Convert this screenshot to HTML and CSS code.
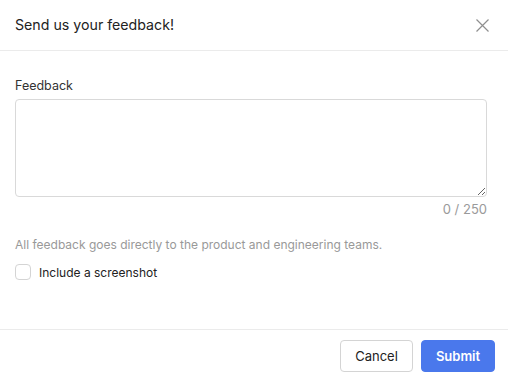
FILE: index.html
```html
<!DOCTYPE html>
<html>
<head>
<meta charset="utf-8">
<link rel="stylesheet" href="styles.css">
</head>
<body>
<div class="modal">
  <div class="modal-header">
    <h2 class="title">Send us your feedback!</h2>
    <button class="close" aria-label="Close">
      <svg width="13" height="13" viewBox="0 0 13 13"><path d="M0.5 0.5L12.5 12.5M12.5 0.5L0.5 12.5" stroke="#8f8f8f" stroke-width="1.2" fill="none"/></svg>
    </button>
  </div>
  <div class="modal-body">
    <label class="field-label">Feedback</label>
    <textarea class="feedback"></textarea>
    <div class="counter">0 / 250</div>
    <p class="helper">All feedback goes directly to the product and engineering teams.</p>
    <label class="check-row"><span class="checkbox"></span><span class="check-label">Include a screenshot</span></label>
  </div>
  <div class="modal-footer">
    <button class="btn btn-cancel">Cancel</button>
    <button class="btn btn-submit">Submit</button>
  </div>
</div>
</body>
</html>
```
FILE: styles.css
```css
* { box-sizing: border-box; }
html, body { margin: 0; padding: 0; background: #fff; }
body { font-family: Inter, "Liberation Sans", sans-serif; color: #1f1f1f; }
.modal { width: 508px; height: 381px; display: flex; flex-direction: column; }
.modal-header {
  height: 51px;
  border-bottom: 1px solid #ebebeb;
  display: flex;
  align-items: center;
  justify-content: space-between;
  padding: 0 19px 0 15px;
}
.title { margin: 0; font-size: 14.2px; font-weight: 400; color: #222; padding-bottom: 2px; }
.close { background: none; border: 0; padding: 0; width: 13px; height: 13px; display: flex; }
.modal-body { padding: 27px 21px 0 15px; flex: 1; display: flex; flex-direction: column; }
.field-label { font-size: 12.5px; color: #333; line-height: 16px; }
.feedback {
  margin-top: 5px;
  width: 472px;
  height: 98px;
  border: 1px solid #d9d9d9;
  border-radius: 4px;
  resize: vertical;
  font-family: inherit;
}
.counter { text-align: right; font-size: 13px; color: #9a9a9a; line-height: 16px; margin-top: 4px; }
.helper { margin: 20px 0 0; font-size: 12px; color: #999; line-height: 15px; }
.check-row { display: flex; align-items: center; margin-top: 12px; gap: 8px; }
.checkbox { width: 16px; height: 16px; border: 1px solid #d4d4d4; border-radius: 4px; }
.check-label { font-size: 12px; color: #222; }
.modal-footer {
  height: 52px;
  border-top: 1px solid #ebebeb;
  display: flex;
  justify-content: flex-end;
  align-items: flex-start;
  padding: 10px 13px 0 0;
  gap: 8px;
}
.btn { height: 32px; border-radius: 4px; font-family: inherit; font-size: 13px; cursor: pointer; }
.btn-cancel { width: 73px; background: #fff; border: 1px solid #d4d4d4; color: #222; }
.btn-submit { width: 74px; background: #4a78ec; border: 1px solid #4a78ec; color: #fff; font-weight: 600; }
```
